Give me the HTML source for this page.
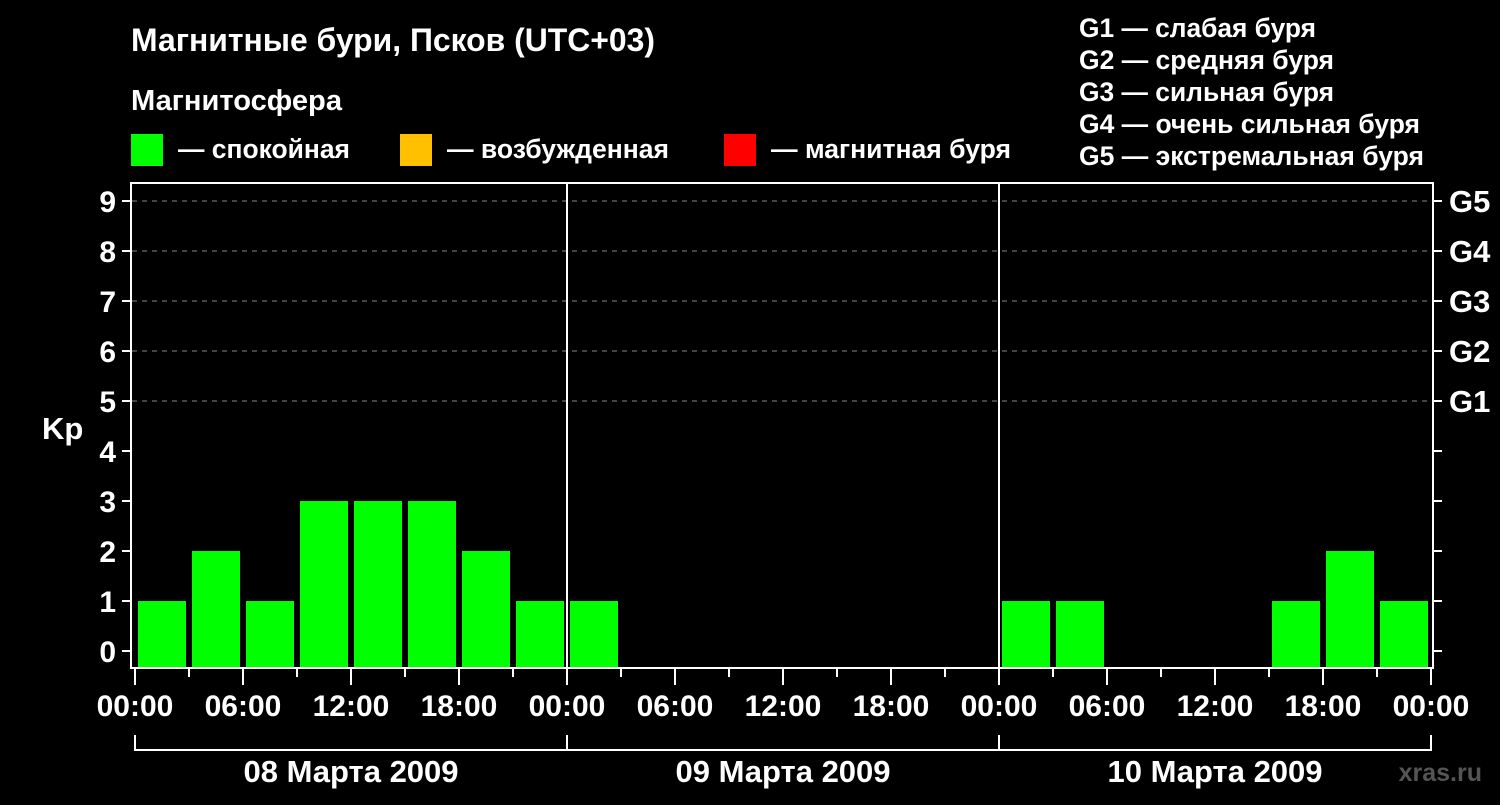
<!DOCTYPE html>
<html><head><meta charset="utf-8"><style>
body{margin:0;background:#000;width:1500px;height:800px;overflow:hidden}
svg text{font-family:"Liberation Sans",sans-serif;font-weight:bold;fill:#fff}
</style></head><body>
<svg width="1500" height="800" viewBox="0 0 1500 800" xmlns="http://www.w3.org/2000/svg">
<rect width="1500" height="800" fill="#000"/>
<text x="131" y="51" font-size="32" textLength="524" lengthAdjust="spacingAndGlyphs">Магнитные бури, Псков (UTC+03)</text>
<text x="131" y="110" font-size="29" textLength="211" lengthAdjust="spacingAndGlyphs">Магнитосфера</text>
<rect x="131" y="134" width="32" height="32" fill="#00ff00"/>
<text x="178" y="158" font-size="26.5" textLength="172" lengthAdjust="spacingAndGlyphs">— спокойная</text>
<rect x="400" y="134" width="32" height="32" fill="#ffc000"/>
<text x="447" y="158" font-size="26.5" textLength="222" lengthAdjust="spacingAndGlyphs">— возбужденная</text>
<rect x="724" y="134" width="32" height="32" fill="#ff0000"/>
<text x="771" y="158" font-size="26.5" textLength="240" lengthAdjust="spacingAndGlyphs">— магнитная буря</text>
<g font-size="26.5">
<text x="1079" y="37" textLength="237" lengthAdjust="spacingAndGlyphs">G1 — слабая буря</text>
<text x="1079" y="69" textLength="255" lengthAdjust="spacingAndGlyphs">G2 — средняя буря</text>
<text x="1079" y="101" textLength="255" lengthAdjust="spacingAndGlyphs">G3 — сильная буря</text>
<text x="1079" y="133" textLength="341" lengthAdjust="spacingAndGlyphs">G4 — очень сильная буря</text>
<text x="1079" y="165" textLength="345" lengthAdjust="spacingAndGlyphs">G5 — экстремальная буря</text>
</g>
<g stroke="#888" stroke-width="1" stroke-dasharray="5,5">
<line x1="132" y1="201" x2="1432" y2="201"/><line x1="132" y1="251" x2="1432" y2="251"/>
<line x1="132" y1="301" x2="1432" y2="301"/><line x1="132" y1="351" x2="1432" y2="351"/>
<line x1="132" y1="401" x2="1432" y2="401"/>
</g>
<g fill="#00ff00">
<rect x="138" y="601" width="48" height="67"/><rect x="192" y="551" width="48" height="117"/>
<rect x="246" y="601" width="48" height="67"/><rect x="300" y="501" width="48" height="167"/>
<rect x="354" y="501" width="48" height="167"/><rect x="408" y="501" width="48" height="167"/>
<rect x="462" y="551" width="48" height="117"/><rect x="516" y="601" width="48" height="67"/>
<rect x="570" y="601" width="48" height="67"/>
<rect x="1002" y="601" width="48" height="67"/><rect x="1056" y="601" width="48" height="67"/>
<rect x="1272" y="601" width="48" height="67"/><rect x="1326" y="551" width="48" height="117"/>
<rect x="1380" y="601" width="48" height="67"/>
</g>
<g stroke="#fff" stroke-width="2" fill="none">
<rect x="131" y="183" width="1302" height="485"/>
<line x1="567" y1="183" x2="567" y2="668"/><line x1="999" y1="183" x2="999" y2="668"/>
<path d="M122 201h9M122 251h9M122 301h9M122 351h9M122 401h9M122 451h9M122 501h9M122 551h9M122 601h9M122 651h9"/>
<path d="M1433 201h9M1433 251h9M1433 301h9M1433 351h9M1433 401h9M1433 451h9M1433 501h9M1433 551h9M1433 601h9M1433 651h9"/>
<path d="M135 668v17M189 668v9M243 668v17M297 668v9M351 668v17M405 668v9M459 668v17M513 668v9M567 668v17M621 668v9M675 668v17M729 668v9M783 668v17M837 668v9M891 668v17M945 668v9M999 668v17M1053 668v9M1107 668v17M1161 668v9M1215 668v17M1269 668v9M1323 668v17M1377 668v9M1431 668v17"/>
<path d="M135 735v15H1431v-15M567 735v15M999 735v15"/>
</g>
<g font-size="30" text-anchor="end">
<text x="116" y="212">9</text><text x="116" y="262">8</text><text x="116" y="312">7</text>
<text x="116" y="362">6</text><text x="116" y="412">5</text><text x="116" y="462">4</text>
<text x="116" y="512">3</text><text x="116" y="562">2</text><text x="116" y="612">1</text>
<text x="116" y="662">0</text>
</g>
<text x="42" y="439" font-size="31">Kp</text>
<g font-size="31">
<text x="1449" y="212">G5</text><text x="1449" y="262">G4</text><text x="1449" y="312">G3</text>
<text x="1449" y="362">G2</text><text x="1449" y="412">G1</text>
</g>
<g font-size="30" text-anchor="middle">
<text x="135" y="716">00:00</text><text x="243" y="716">06:00</text><text x="351" y="716">12:00</text>
<text x="459" y="716">18:00</text><text x="567" y="716">00:00</text><text x="675" y="716">06:00</text>
<text x="783" y="716">12:00</text><text x="891" y="716">18:00</text><text x="999" y="716">00:00</text>
<text x="1107" y="716">06:00</text><text x="1215" y="716">12:00</text><text x="1323" y="716">18:00</text>
<text x="1431" y="716">00:00</text>
</g>
<g font-size="31" text-anchor="middle">
<text x="351" y="782">08 Марта 2009</text><text x="783" y="782">09 Марта 2009</text>
<text x="1215" y="782">10 Марта 2009</text>
</g>
<text x="1482" y="781" font-size="25" text-anchor="end" style="fill:#555">xras.ru</text>
</svg>
</body></html>
